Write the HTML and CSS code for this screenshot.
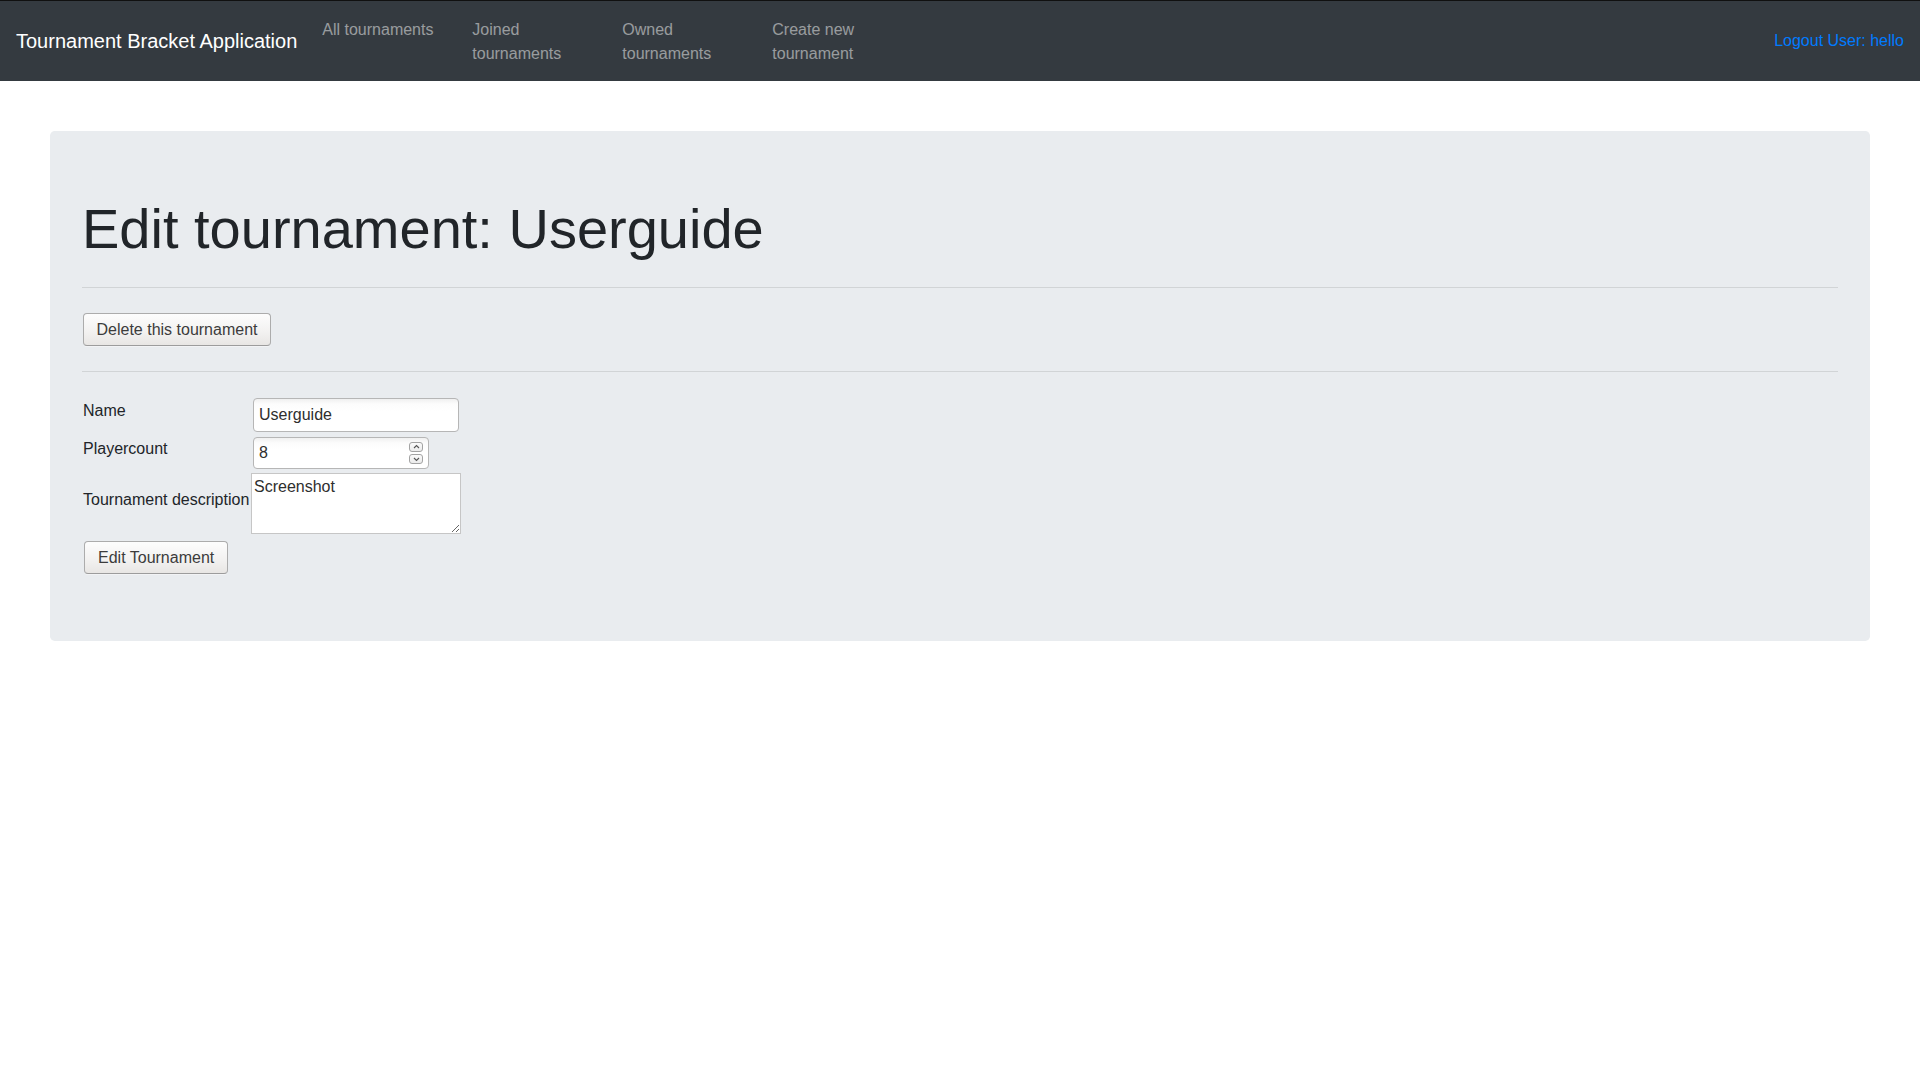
FILE: index.html
```html
<!DOCTYPE html>
<html lang="en">
<head>
<meta charset="utf-8">
<title>Tournament Bracket Application</title>
<link rel="stylesheet" href="styles.css">
</head>
<body>
<header class="navbar">
  <a class="brand" href="#">Tournament Bracket Application</a>
  <ul class="nav">
    <li class="nav-item"><a class="nav-link" href="#">All tournaments</a></li>
    <li class="nav-item"><a class="nav-link" href="#">Joined tournaments</a></li>
    <li class="nav-item"><a class="nav-link" href="#">Owned tournaments</a></li>
    <li class="nav-item"><a class="nav-link" href="#">Create new tournament</a></li>
  </ul>
  <a class="logout" href="#">Logout User: hello</a>
</header>
<main class="page">
  <section class="jumbotron">
    <h1 class="title">Edit tournament: Userguide</h1>
    <hr class="divider">
    <div class="delete-row"><button class="btn" type="button">Delete this tournament</button></div>
    <hr class="divider">
    <form class="edit-form">
      <label class="field-label" for="name">Name</label>
      <input class="text-input name-input" id="name" type="text" value="Userguide">
      <label class="field-label" for="count">Playercount</label>
      <div class="number-wrap">
        <input class="text-input number-input" id="count" type="text" value="8">
        <span class="spin">
          <span class="spin-btn"><svg width="11" height="8" viewBox="0 0 11 8"><polyline points="3,5 5.5,2.5 8,5" fill="none" stroke="#555" stroke-width="1.1"/></svg></span>
          <span class="spin-btn"><svg width="11" height="8" viewBox="0 0 11 8"><polyline points="3,3 5.5,5.5 8,3" fill="none" stroke="#555" stroke-width="1.1"/></svg></span>
        </span>
      </div>
      <label class="field-label" for="desc">Tournament description</label>
      <textarea class="desc-input" id="desc">Screenshot</textarea>
      <button class="btn edit-btn" type="button">Edit Tournament</button>
    </form>
  </section>
</main>
</body>
</html>
```
FILE: styles.css
```css
* { box-sizing: border-box; }

body {
  margin: 0;
  font-family: "Liberation Sans", Arial, sans-serif;
  font-size: 16px;
  line-height: 1.5;
  color: #212529;
  background: #fff;
}

a { text-decoration: none; }

.navbar {
  display: flex;
  align-items: center;
  padding: 8px 16px;
  border-top: 1px solid #101010;
  background: #343a40;
}

.brand {
  padding: 5px 0;
  margin-right: 17px;
  font-size: 20px;
  line-height: 30px;
  color: #fff;
  white-space: nowrap;
}

.nav {
  display: flex;
  list-style: none;
  margin: 0;
  padding: 0;
  align-self: stretch;
}

.nav-item {
  width: 150px;
}

.nav-link {
  display: block;
  padding: 9px 8px 7px;
  width: 140px;
  color: rgba(255, 255, 255, 0.5);
  line-height: 24px;
}

.logout {
  margin-left: auto;
  color: #007bff;
  line-height: 24px;
}

.page {
  padding: 50px 50px 0;
}

.jumbotron {
  background: #e9ecef;
  border-radius: 4.8px;
  padding: 64px 32px 67px;
}

.title {
  margin: 0 0 25px;
  font-size: 56px;
  font-weight: 300;
  line-height: 1.2;
  color: #212529;
}

.divider {
  margin: 16px 0;
  border: 0;
  border-top: 1px solid rgba(0, 0, 0, 0.1);
  height: 0;
}

.delete-row {
  padding: 9px 0 9px 1px;
}

.btn {
  height: 33px;
  padding: 0 13px;
  font-family: "Liberation Sans", Arial, sans-serif;
  font-size: 16px;
  line-height: 24px;
  color: #3c3c3c;
  background: linear-gradient(#fdfdfd, #f2f1f0 60%, #e8e6e4);
  border: 1px solid #acacac;
  border-bottom-color: #9c9c9c;
  border-radius: 4px;
  box-shadow: 0 1px 0 rgba(255,255,255,0.4);
}

.delete-row .btn {
  padding: 0 12.5px;
}

.edit-form {
  display: grid;
  grid-template-columns: 167px auto;
  column-gap: 2px;
  row-gap: 4px;
  justify-items: start;
  align-items: center;
  padding-top: 10px;
}

.field-label {
  padding-left: 1px;
  padding-bottom: 8px;
  white-space: nowrap;
  line-height: 24px;
}

.text-input {
  height: 34px;
  padding: 0 5px;
  font-family: "Liberation Sans", Arial, sans-serif;
  font-size: 16px;
  line-height: 24px;
  color: #2e2e2e;
  border: 1px solid #b6b6b6;
  border-radius: 4px;
  background: linear-gradient(#f0f0f0, #fcfcfc 5px, #fff 12px);
}

.name-input {
  width: 206px;
  margin-left: 2px;
}

.number-wrap {
  position: relative;
  margin-left: 2px;
  margin-top: 1px;
}

.number-input {
  width: 176px;
  height: 32px;
  display: block;
}

.spin {
  position: absolute;
  right: 6px;
  top: 5px;
  display: flex;
  flex-direction: column;
  gap: 2px;
}

.spin-btn {
  display: flex;
  align-items: center;
  justify-content: center;
  width: 14px;
  height: 10px;
  border: 1px solid #a3a3a3;
  border-radius: 3px;
  background: linear-gradient(#fbfbfb, #ebebeb);
}

.desc-input {
  width: 210px;
  height: 61px;
  padding: 1px 2px;
  font-family: "Liberation Sans", Arial, sans-serif;
  font-size: 16px;
  line-height: 24px;
  color: #2e2e2e;
  border: 1px solid #c6c6c6;
  border-radius: 0;
  background: #fff;
  resize: both;
}

.edit-btn {
  grid-column: 1 / 3;
  margin-top: 3px;
  margin-left: 2px;
}
```
